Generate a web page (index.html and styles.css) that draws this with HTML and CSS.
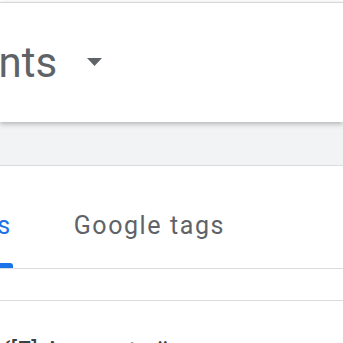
FILE: index.html
```html
<!DOCTYPE html>
<html>
<head>
<meta charset="utf-8">
<link rel="stylesheet" href="styles.css">
</head>
<body>
<div class="page">
  <header class="header">
    <div class="title-row">
      <span class="title">Accounts</span>
      <svg class="caret" width="15" height="8" viewBox="0 0 15 8"><path d="M0 0 H15 L7.5 8 Z" fill="#5f6368"/></svg>
    </div>
  </header>
  <div class="band"></div>
  <nav class="tabs">
    <div class="tab active"><span class="tab-label">Containers</span><span class="indicator"></span></div>
    <div class="tab"><span class="tab-label">Google tags</span></div>
  </nav>
  <div class="spacer"></div>
  <div class="row"><span class="row-text">{[E] Accounts ü</span></div>
</div>
</body>
</html>
```
FILE: styles.css
```css
* { box-sizing: border-box; }
html, body { margin: 0; padding: 0; background: #fff; overflow: hidden; }
body { font-family: Roboto, "Noto Sans", sans-serif; width: 343px; height: 343px; }
.page { display: flex; flex-direction: column; width: 343px; }
.header {
  margin-top: 2px;
  border-top: 1px solid #d6d7d9;
  height: 120px;
  background: #fff;
  position: relative;
  z-index: 1;
  box-shadow: 0 2px 5px rgba(60, 64, 67, 0.35);
  padding-top: 35px;
}
.title-row { display: flex; align-items: center; gap: 30px; margin-left: -120px; }
.title { font-size: 42px; line-height: 50px; color: #5f6368; white-space: nowrap; }
.caret { display: block; margin-top: -3px; }
.band { height: 44px; background: #f1f3f4; border-bottom: 1px solid #dadce0; }
.tabs {
  display: flex;
  gap: 62px;
  padding-top: 45px;
  border-bottom: 1px solid #dadce0;
  margin-left: -125px;
}
.tab { display: flex; flex-direction: column; }
.tab-label { font-size: 25px; line-height: 30px; color: #5f6368; letter-spacing: 1.6px; white-space: nowrap; }
.tab.active .tab-label { color: #1a73e8; }
.indicator { height: 5px; margin-top: 22px; background: #1a73e8; border-radius: 3px 3px 0 0; margin-right: -1px; }
.tab:not(.active) .tab-label { margin-bottom: 27px; }
.spacer { height: 32px; border-bottom: 1px solid #dadce0; }
.row { padding-top: 36px; }
.row-text { font-size: 25px; color: #3c4043; white-space: nowrap; margin-left: 2px; }
```
